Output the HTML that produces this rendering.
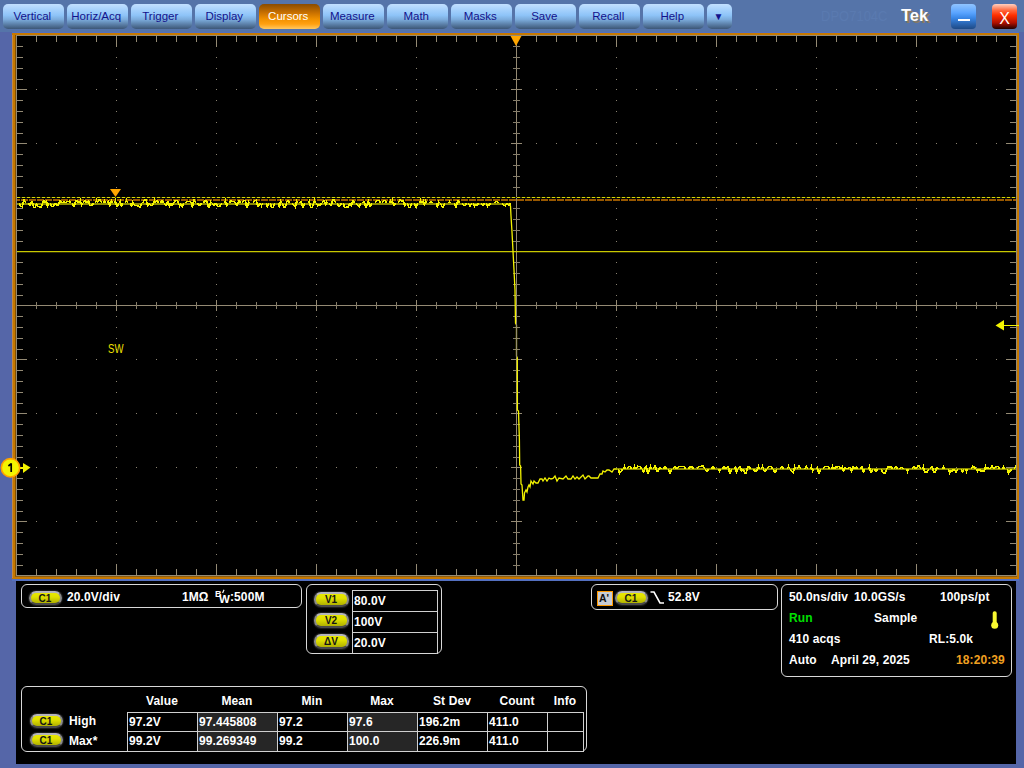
<!DOCTYPE html>
<html><head><meta charset="utf-8">
<style>
*{margin:0;padding:0;box-sizing:border-box}
html,body{width:1024px;height:768px;overflow:hidden;background:#5566a8;font-family:"Liberation Sans",sans-serif}
.tb{position:absolute;left:0;top:0;width:1024px;height:32px;background:#5574a9}
.hl{position:absolute;left:12px;top:32px;width:1007px;height:1px;background:#5270c0}
.fr{position:absolute;left:12px;top:33px;width:1007px;height:546px;background:#c67800}
.frl{position:absolute;left:15px;top:35px;width:1px;height:541px;background:#845000}
.frl2{position:absolute;left:12px;top:35px;width:1px;height:543px;background:#c08848}
.btn{position:absolute;top:4px;height:25px;width:60.5px;border-radius:5px;background:linear-gradient(#c2e0ff 0%,#a4d0fc 25%,#8ec4f8 45%,#7cacdc 62%,#5a7ea6 82%,#3c5676 100%);color:#12128c;font-size:11.5px;text-align:center;line-height:25px;text-indent:-2px}
.btn.on{background:linear-gradient(#8a4c00 0%,#c87000 35%,#f09000 60%,#ffa010 80%,#ffc860 100%);color:#fff}
.mn{position:absolute;left:951px;top:4px;width:25px;height:25px;border-radius:4px;background:linear-gradient(#90c4ff 0%,#5aa4ff 35%,#3a88e8 55%,#2a64b0 80%,#1e4a86 100%)}
.mn i{position:absolute;left:7px;top:15px;width:12px;height:2px;background:#fff}
.cl{position:absolute;left:992px;top:4px;width:25px;height:25px;border-radius:4px;background:linear-gradient(#ffd0c0 0%,#ff6a40 25%,#ff3000 45%,#b01000 75%,#200000 100%);color:#fff;font-size:16px;text-align:center;line-height:29px;overflow:hidden}
.tek{position:absolute;left:901px;top:6px;font-size:16.5px;font-weight:bold;color:#fff;text-shadow:2px 2px 0 #8a7a60}
.dpo{position:absolute;left:821px;top:8px;font-size:13px;color:#5a7ab0;transform:scaleY(1.1);transform-origin:0 0}
.bp{position:absolute;left:16px;top:581px;width:1000px;height:183px;background:#000}
.hl2{position:absolute;left:12px;top:579px;width:1007px;height:2px;background:#5470c0}
.frb{position:absolute;left:15px;top:576px;width:1002px;height:1px;background:#8a5a10}
.box{position:absolute;border:1.5px solid #d8d8d8;border-radius:6px}
.t{position:absolute;color:#fff;font-size:12px;font-weight:bold;white-space:nowrap;line-height:14px;letter-spacing:0.1px}
.pill{position:absolute;width:33px;height:14px;border-radius:7px;border:2px solid #8a8a8a;border-top-color:#b4b4bc;border-bottom-color:#4a4a4a;background:linear-gradient(#e8e800 0%,#e0e000 40%,#b0b000 100%);box-shadow:0 0 1px 1px #202020;color:#141414;font-size:10px;font-weight:bold;text-align:center;line-height:12px;text-indent:-1px}
</style></head><body>
<div class="tb"></div>
<div class="btn" style="left:3px">Vertical</div>
<div class="btn" style="left:67px">Horiz/Acq</div>
<div class="btn" style="left:131px">Trigger</div>
<div class="btn" style="left:195px">Display</div>
<div class="btn on" style="left:259px">Cursors</div>
<div class="btn" style="left:323px">Measure</div>
<div class="btn" style="left:387px">Math</div>
<div class="btn" style="left:451px">Masks</div>
<div class="btn" style="left:515px">Save</div>
<div class="btn" style="left:579px">Recall</div>
<div class="btn" style="left:643px">Help</div>
<div class="btn" style="left:707px;width:25px;font-size:10px">&#9660;</div>
<div class="dpo">DPO7104C</div>
<div class="tek">Tek</div>
<div class="mn"><i></i></div>
<div class="cl">X</div>
<div class="hl"></div>
<div class="fr"></div>
<div class="frl"></div>
<div class="frl2"></div>
<div class="frb"></div>
<div class="hl2"></div>
<svg width="1024" height="768" viewBox="0 0 1024 768" style="position:absolute;left:0;top:0" shape-rendering="crispEdges">
<defs><clipPath id="gc"><rect x="17" y="36" width="999" height="539"/></clipPath></defs>
<rect x="16" y="35" width="1001" height="541" fill="#000"/>
<path d="M116 57.05h1v1h-1zM116 67.85h1v1h-1zM116 78.65h1v1h-1zM116 89.45h1v1h-1zM116 100.25h1v1h-1zM116 111.05h1v1h-1zM116 121.85h1v1h-1zM116 132.65h1v1h-1zM116 143.45h1v1h-1zM116 154.25h1v1h-1zM116 165.05h1v1h-1zM116 175.85h1v1h-1zM116 186.65h1v1h-1zM116 197.45h1v1h-1zM116 208.25h1v1h-1zM116 219.05h1v1h-1zM116 229.85h1v1h-1zM116 240.65h1v1h-1zM116 251.45h1v1h-1zM116 262.25h1v1h-1zM116 273.05h1v1h-1zM116 283.85h1v1h-1zM116 294.65h1v1h-1zM116 305.45h1v1h-1zM116 316.25h1v1h-1zM116 327.05h1v1h-1zM116 337.85h1v1h-1zM116 348.65h1v1h-1zM116 359.45h1v1h-1zM116 370.25h1v1h-1zM116 381.05h1v1h-1zM116 391.85h1v1h-1zM116 402.65h1v1h-1zM116 413.45h1v1h-1zM116 424.25h1v1h-1zM116 435.05h1v1h-1zM116 445.85h1v1h-1zM116 456.65h1v1h-1zM116 467.45h1v1h-1zM116 478.25h1v1h-1zM116 489.05h1v1h-1zM116 499.85h1v1h-1zM116 510.65h1v1h-1zM116 521.45h1v1h-1zM116 532.25h1v1h-1zM116 543.05h1v1h-1zM116 553.85h1v1h-1zM216 57.05h1v1h-1zM216 67.85h1v1h-1zM216 78.65h1v1h-1zM216 89.45h1v1h-1zM216 100.25h1v1h-1zM216 111.05h1v1h-1zM216 121.85h1v1h-1zM216 132.65h1v1h-1zM216 143.45h1v1h-1zM216 154.25h1v1h-1zM216 165.05h1v1h-1zM216 175.85h1v1h-1zM216 186.65h1v1h-1zM216 197.45h1v1h-1zM216 208.25h1v1h-1zM216 219.05h1v1h-1zM216 229.85h1v1h-1zM216 240.65h1v1h-1zM216 251.45h1v1h-1zM216 262.25h1v1h-1zM216 273.05h1v1h-1zM216 283.85h1v1h-1zM216 294.65h1v1h-1zM216 305.45h1v1h-1zM216 316.25h1v1h-1zM216 327.05h1v1h-1zM216 337.85h1v1h-1zM216 348.65h1v1h-1zM216 359.45h1v1h-1zM216 370.25h1v1h-1zM216 381.05h1v1h-1zM216 391.85h1v1h-1zM216 402.65h1v1h-1zM216 413.45h1v1h-1zM216 424.25h1v1h-1zM216 435.05h1v1h-1zM216 445.85h1v1h-1zM216 456.65h1v1h-1zM216 467.45h1v1h-1zM216 478.25h1v1h-1zM216 489.05h1v1h-1zM216 499.85h1v1h-1zM216 510.65h1v1h-1zM216 521.45h1v1h-1zM216 532.25h1v1h-1zM216 543.05h1v1h-1zM216 553.85h1v1h-1zM316 57.05h1v1h-1zM316 67.85h1v1h-1zM316 78.65h1v1h-1zM316 89.45h1v1h-1zM316 100.25h1v1h-1zM316 111.05h1v1h-1zM316 121.85h1v1h-1zM316 132.65h1v1h-1zM316 143.45h1v1h-1zM316 154.25h1v1h-1zM316 165.05h1v1h-1zM316 175.85h1v1h-1zM316 186.65h1v1h-1zM316 197.45h1v1h-1zM316 208.25h1v1h-1zM316 219.05h1v1h-1zM316 229.85h1v1h-1zM316 240.65h1v1h-1zM316 251.45h1v1h-1zM316 262.25h1v1h-1zM316 273.05h1v1h-1zM316 283.85h1v1h-1zM316 294.65h1v1h-1zM316 305.45h1v1h-1zM316 316.25h1v1h-1zM316 327.05h1v1h-1zM316 337.85h1v1h-1zM316 348.65h1v1h-1zM316 359.45h1v1h-1zM316 370.25h1v1h-1zM316 381.05h1v1h-1zM316 391.85h1v1h-1zM316 402.65h1v1h-1zM316 413.45h1v1h-1zM316 424.25h1v1h-1zM316 435.05h1v1h-1zM316 445.85h1v1h-1zM316 456.65h1v1h-1zM316 467.45h1v1h-1zM316 478.25h1v1h-1zM316 489.05h1v1h-1zM316 499.85h1v1h-1zM316 510.65h1v1h-1zM316 521.45h1v1h-1zM316 532.25h1v1h-1zM316 543.05h1v1h-1zM316 553.85h1v1h-1zM416 57.05h1v1h-1zM416 67.85h1v1h-1zM416 78.65h1v1h-1zM416 89.45h1v1h-1zM416 100.25h1v1h-1zM416 111.05h1v1h-1zM416 121.85h1v1h-1zM416 132.65h1v1h-1zM416 143.45h1v1h-1zM416 154.25h1v1h-1zM416 165.05h1v1h-1zM416 175.85h1v1h-1zM416 186.65h1v1h-1zM416 197.45h1v1h-1zM416 208.25h1v1h-1zM416 219.05h1v1h-1zM416 229.85h1v1h-1zM416 240.65h1v1h-1zM416 251.45h1v1h-1zM416 262.25h1v1h-1zM416 273.05h1v1h-1zM416 283.85h1v1h-1zM416 294.65h1v1h-1zM416 305.45h1v1h-1zM416 316.25h1v1h-1zM416 327.05h1v1h-1zM416 337.85h1v1h-1zM416 348.65h1v1h-1zM416 359.45h1v1h-1zM416 370.25h1v1h-1zM416 381.05h1v1h-1zM416 391.85h1v1h-1zM416 402.65h1v1h-1zM416 413.45h1v1h-1zM416 424.25h1v1h-1zM416 435.05h1v1h-1zM416 445.85h1v1h-1zM416 456.65h1v1h-1zM416 467.45h1v1h-1zM416 478.25h1v1h-1zM416 489.05h1v1h-1zM416 499.85h1v1h-1zM416 510.65h1v1h-1zM416 521.45h1v1h-1zM416 532.25h1v1h-1zM416 543.05h1v1h-1zM416 553.85h1v1h-1zM616 57.05h1v1h-1zM616 67.85h1v1h-1zM616 78.65h1v1h-1zM616 89.45h1v1h-1zM616 100.25h1v1h-1zM616 111.05h1v1h-1zM616 121.85h1v1h-1zM616 132.65h1v1h-1zM616 143.45h1v1h-1zM616 154.25h1v1h-1zM616 165.05h1v1h-1zM616 175.85h1v1h-1zM616 186.65h1v1h-1zM616 197.45h1v1h-1zM616 208.25h1v1h-1zM616 219.05h1v1h-1zM616 229.85h1v1h-1zM616 240.65h1v1h-1zM616 251.45h1v1h-1zM616 262.25h1v1h-1zM616 273.05h1v1h-1zM616 283.85h1v1h-1zM616 294.65h1v1h-1zM616 305.45h1v1h-1zM616 316.25h1v1h-1zM616 327.05h1v1h-1zM616 337.85h1v1h-1zM616 348.65h1v1h-1zM616 359.45h1v1h-1zM616 370.25h1v1h-1zM616 381.05h1v1h-1zM616 391.85h1v1h-1zM616 402.65h1v1h-1zM616 413.45h1v1h-1zM616 424.25h1v1h-1zM616 435.05h1v1h-1zM616 445.85h1v1h-1zM616 456.65h1v1h-1zM616 467.45h1v1h-1zM616 478.25h1v1h-1zM616 489.05h1v1h-1zM616 499.85h1v1h-1zM616 510.65h1v1h-1zM616 521.45h1v1h-1zM616 532.25h1v1h-1zM616 543.05h1v1h-1zM616 553.85h1v1h-1zM716 57.05h1v1h-1zM716 67.85h1v1h-1zM716 78.65h1v1h-1zM716 89.45h1v1h-1zM716 100.25h1v1h-1zM716 111.05h1v1h-1zM716 121.85h1v1h-1zM716 132.65h1v1h-1zM716 143.45h1v1h-1zM716 154.25h1v1h-1zM716 165.05h1v1h-1zM716 175.85h1v1h-1zM716 186.65h1v1h-1zM716 197.45h1v1h-1zM716 208.25h1v1h-1zM716 219.05h1v1h-1zM716 229.85h1v1h-1zM716 240.65h1v1h-1zM716 251.45h1v1h-1zM716 262.25h1v1h-1zM716 273.05h1v1h-1zM716 283.85h1v1h-1zM716 294.65h1v1h-1zM716 305.45h1v1h-1zM716 316.25h1v1h-1zM716 327.05h1v1h-1zM716 337.85h1v1h-1zM716 348.65h1v1h-1zM716 359.45h1v1h-1zM716 370.25h1v1h-1zM716 381.05h1v1h-1zM716 391.85h1v1h-1zM716 402.65h1v1h-1zM716 413.45h1v1h-1zM716 424.25h1v1h-1zM716 435.05h1v1h-1zM716 445.85h1v1h-1zM716 456.65h1v1h-1zM716 467.45h1v1h-1zM716 478.25h1v1h-1zM716 489.05h1v1h-1zM716 499.85h1v1h-1zM716 510.65h1v1h-1zM716 521.45h1v1h-1zM716 532.25h1v1h-1zM716 543.05h1v1h-1zM716 553.85h1v1h-1zM816 57.05h1v1h-1zM816 67.85h1v1h-1zM816 78.65h1v1h-1zM816 89.45h1v1h-1zM816 100.25h1v1h-1zM816 111.05h1v1h-1zM816 121.85h1v1h-1zM816 132.65h1v1h-1zM816 143.45h1v1h-1zM816 154.25h1v1h-1zM816 165.05h1v1h-1zM816 175.85h1v1h-1zM816 186.65h1v1h-1zM816 197.45h1v1h-1zM816 208.25h1v1h-1zM816 219.05h1v1h-1zM816 229.85h1v1h-1zM816 240.65h1v1h-1zM816 251.45h1v1h-1zM816 262.25h1v1h-1zM816 273.05h1v1h-1zM816 283.85h1v1h-1zM816 294.65h1v1h-1zM816 305.45h1v1h-1zM816 316.25h1v1h-1zM816 327.05h1v1h-1zM816 337.85h1v1h-1zM816 348.65h1v1h-1zM816 359.45h1v1h-1zM816 370.25h1v1h-1zM816 381.05h1v1h-1zM816 391.85h1v1h-1zM816 402.65h1v1h-1zM816 413.45h1v1h-1zM816 424.25h1v1h-1zM816 435.05h1v1h-1zM816 445.85h1v1h-1zM816 456.65h1v1h-1zM816 467.45h1v1h-1zM816 478.25h1v1h-1zM816 489.05h1v1h-1zM816 499.85h1v1h-1zM816 510.65h1v1h-1zM816 521.45h1v1h-1zM816 532.25h1v1h-1zM816 543.05h1v1h-1zM816 553.85h1v1h-1zM916 57.05h1v1h-1zM916 67.85h1v1h-1zM916 78.65h1v1h-1zM916 89.45h1v1h-1zM916 100.25h1v1h-1zM916 111.05h1v1h-1zM916 121.85h1v1h-1zM916 132.65h1v1h-1zM916 143.45h1v1h-1zM916 154.25h1v1h-1zM916 165.05h1v1h-1zM916 175.85h1v1h-1zM916 186.65h1v1h-1zM916 197.45h1v1h-1zM916 208.25h1v1h-1zM916 219.05h1v1h-1zM916 229.85h1v1h-1zM916 240.65h1v1h-1zM916 251.45h1v1h-1zM916 262.25h1v1h-1zM916 273.05h1v1h-1zM916 283.85h1v1h-1zM916 294.65h1v1h-1zM916 305.45h1v1h-1zM916 316.25h1v1h-1zM916 327.05h1v1h-1zM916 337.85h1v1h-1zM916 348.65h1v1h-1zM916 359.45h1v1h-1zM916 370.25h1v1h-1zM916 381.05h1v1h-1zM916 391.85h1v1h-1zM916 402.65h1v1h-1zM916 413.45h1v1h-1zM916 424.25h1v1h-1zM916 435.05h1v1h-1zM916 445.85h1v1h-1zM916 456.65h1v1h-1zM916 467.45h1v1h-1zM916 478.25h1v1h-1zM916 489.05h1v1h-1zM916 499.85h1v1h-1zM916 510.65h1v1h-1zM916 521.45h1v1h-1zM916 532.25h1v1h-1zM916 543.05h1v1h-1zM916 553.85h1v1h-1zM36 89.45h1v1h-1zM56 89.45h1v1h-1zM76 89.45h1v1h-1zM96 89.45h1v1h-1zM136 89.45h1v1h-1zM156 89.45h1v1h-1zM176 89.45h1v1h-1zM196 89.45h1v1h-1zM236 89.45h1v1h-1zM256 89.45h1v1h-1zM276 89.45h1v1h-1zM296 89.45h1v1h-1zM336 89.45h1v1h-1zM356 89.45h1v1h-1zM376 89.45h1v1h-1zM396 89.45h1v1h-1zM436 89.45h1v1h-1zM456 89.45h1v1h-1zM476 89.45h1v1h-1zM496 89.45h1v1h-1zM536 89.45h1v1h-1zM556 89.45h1v1h-1zM576 89.45h1v1h-1zM596 89.45h1v1h-1zM636 89.45h1v1h-1zM656 89.45h1v1h-1zM676 89.45h1v1h-1zM696 89.45h1v1h-1zM736 89.45h1v1h-1zM756 89.45h1v1h-1zM776 89.45h1v1h-1zM796 89.45h1v1h-1zM836 89.45h1v1h-1zM856 89.45h1v1h-1zM876 89.45h1v1h-1zM896 89.45h1v1h-1zM936 89.45h1v1h-1zM956 89.45h1v1h-1zM976 89.45h1v1h-1zM996 89.45h1v1h-1zM36 143.45h1v1h-1zM56 143.45h1v1h-1zM76 143.45h1v1h-1zM96 143.45h1v1h-1zM136 143.45h1v1h-1zM156 143.45h1v1h-1zM176 143.45h1v1h-1zM196 143.45h1v1h-1zM236 143.45h1v1h-1zM256 143.45h1v1h-1zM276 143.45h1v1h-1zM296 143.45h1v1h-1zM336 143.45h1v1h-1zM356 143.45h1v1h-1zM376 143.45h1v1h-1zM396 143.45h1v1h-1zM436 143.45h1v1h-1zM456 143.45h1v1h-1zM476 143.45h1v1h-1zM496 143.45h1v1h-1zM536 143.45h1v1h-1zM556 143.45h1v1h-1zM576 143.45h1v1h-1zM596 143.45h1v1h-1zM636 143.45h1v1h-1zM656 143.45h1v1h-1zM676 143.45h1v1h-1zM696 143.45h1v1h-1zM736 143.45h1v1h-1zM756 143.45h1v1h-1zM776 143.45h1v1h-1zM796 143.45h1v1h-1zM836 143.45h1v1h-1zM856 143.45h1v1h-1zM876 143.45h1v1h-1zM896 143.45h1v1h-1zM936 143.45h1v1h-1zM956 143.45h1v1h-1zM976 143.45h1v1h-1zM996 143.45h1v1h-1zM36 197.45h1v1h-1zM56 197.45h1v1h-1zM76 197.45h1v1h-1zM96 197.45h1v1h-1zM136 197.45h1v1h-1zM156 197.45h1v1h-1zM176 197.45h1v1h-1zM196 197.45h1v1h-1zM236 197.45h1v1h-1zM256 197.45h1v1h-1zM276 197.45h1v1h-1zM296 197.45h1v1h-1zM336 197.45h1v1h-1zM356 197.45h1v1h-1zM376 197.45h1v1h-1zM396 197.45h1v1h-1zM436 197.45h1v1h-1zM456 197.45h1v1h-1zM476 197.45h1v1h-1zM496 197.45h1v1h-1zM536 197.45h1v1h-1zM556 197.45h1v1h-1zM576 197.45h1v1h-1zM596 197.45h1v1h-1zM636 197.45h1v1h-1zM656 197.45h1v1h-1zM676 197.45h1v1h-1zM696 197.45h1v1h-1zM736 197.45h1v1h-1zM756 197.45h1v1h-1zM776 197.45h1v1h-1zM796 197.45h1v1h-1zM836 197.45h1v1h-1zM856 197.45h1v1h-1zM876 197.45h1v1h-1zM896 197.45h1v1h-1zM936 197.45h1v1h-1zM956 197.45h1v1h-1zM976 197.45h1v1h-1zM996 197.45h1v1h-1zM36 251.45h1v1h-1zM56 251.45h1v1h-1zM76 251.45h1v1h-1zM96 251.45h1v1h-1zM136 251.45h1v1h-1zM156 251.45h1v1h-1zM176 251.45h1v1h-1zM196 251.45h1v1h-1zM236 251.45h1v1h-1zM256 251.45h1v1h-1zM276 251.45h1v1h-1zM296 251.45h1v1h-1zM336 251.45h1v1h-1zM356 251.45h1v1h-1zM376 251.45h1v1h-1zM396 251.45h1v1h-1zM436 251.45h1v1h-1zM456 251.45h1v1h-1zM476 251.45h1v1h-1zM496 251.45h1v1h-1zM536 251.45h1v1h-1zM556 251.45h1v1h-1zM576 251.45h1v1h-1zM596 251.45h1v1h-1zM636 251.45h1v1h-1zM656 251.45h1v1h-1zM676 251.45h1v1h-1zM696 251.45h1v1h-1zM736 251.45h1v1h-1zM756 251.45h1v1h-1zM776 251.45h1v1h-1zM796 251.45h1v1h-1zM836 251.45h1v1h-1zM856 251.45h1v1h-1zM876 251.45h1v1h-1zM896 251.45h1v1h-1zM936 251.45h1v1h-1zM956 251.45h1v1h-1zM976 251.45h1v1h-1zM996 251.45h1v1h-1zM36 359.45h1v1h-1zM56 359.45h1v1h-1zM76 359.45h1v1h-1zM96 359.45h1v1h-1zM136 359.45h1v1h-1zM156 359.45h1v1h-1zM176 359.45h1v1h-1zM196 359.45h1v1h-1zM236 359.45h1v1h-1zM256 359.45h1v1h-1zM276 359.45h1v1h-1zM296 359.45h1v1h-1zM336 359.45h1v1h-1zM356 359.45h1v1h-1zM376 359.45h1v1h-1zM396 359.45h1v1h-1zM436 359.45h1v1h-1zM456 359.45h1v1h-1zM476 359.45h1v1h-1zM496 359.45h1v1h-1zM536 359.45h1v1h-1zM556 359.45h1v1h-1zM576 359.45h1v1h-1zM596 359.45h1v1h-1zM636 359.45h1v1h-1zM656 359.45h1v1h-1zM676 359.45h1v1h-1zM696 359.45h1v1h-1zM736 359.45h1v1h-1zM756 359.45h1v1h-1zM776 359.45h1v1h-1zM796 359.45h1v1h-1zM836 359.45h1v1h-1zM856 359.45h1v1h-1zM876 359.45h1v1h-1zM896 359.45h1v1h-1zM936 359.45h1v1h-1zM956 359.45h1v1h-1zM976 359.45h1v1h-1zM996 359.45h1v1h-1zM36 413.45h1v1h-1zM56 413.45h1v1h-1zM76 413.45h1v1h-1zM96 413.45h1v1h-1zM136 413.45h1v1h-1zM156 413.45h1v1h-1zM176 413.45h1v1h-1zM196 413.45h1v1h-1zM236 413.45h1v1h-1zM256 413.45h1v1h-1zM276 413.45h1v1h-1zM296 413.45h1v1h-1zM336 413.45h1v1h-1zM356 413.45h1v1h-1zM376 413.45h1v1h-1zM396 413.45h1v1h-1zM436 413.45h1v1h-1zM456 413.45h1v1h-1zM476 413.45h1v1h-1zM496 413.45h1v1h-1zM536 413.45h1v1h-1zM556 413.45h1v1h-1zM576 413.45h1v1h-1zM596 413.45h1v1h-1zM636 413.45h1v1h-1zM656 413.45h1v1h-1zM676 413.45h1v1h-1zM696 413.45h1v1h-1zM736 413.45h1v1h-1zM756 413.45h1v1h-1zM776 413.45h1v1h-1zM796 413.45h1v1h-1zM836 413.45h1v1h-1zM856 413.45h1v1h-1zM876 413.45h1v1h-1zM896 413.45h1v1h-1zM936 413.45h1v1h-1zM956 413.45h1v1h-1zM976 413.45h1v1h-1zM996 413.45h1v1h-1zM36 467.45h1v1h-1zM56 467.45h1v1h-1zM76 467.45h1v1h-1zM96 467.45h1v1h-1zM136 467.45h1v1h-1zM156 467.45h1v1h-1zM176 467.45h1v1h-1zM196 467.45h1v1h-1zM236 467.45h1v1h-1zM256 467.45h1v1h-1zM276 467.45h1v1h-1zM296 467.45h1v1h-1zM336 467.45h1v1h-1zM356 467.45h1v1h-1zM376 467.45h1v1h-1zM396 467.45h1v1h-1zM436 467.45h1v1h-1zM456 467.45h1v1h-1zM476 467.45h1v1h-1zM496 467.45h1v1h-1zM536 467.45h1v1h-1zM556 467.45h1v1h-1zM576 467.45h1v1h-1zM596 467.45h1v1h-1zM636 467.45h1v1h-1zM656 467.45h1v1h-1zM676 467.45h1v1h-1zM696 467.45h1v1h-1zM736 467.45h1v1h-1zM756 467.45h1v1h-1zM776 467.45h1v1h-1zM796 467.45h1v1h-1zM836 467.45h1v1h-1zM856 467.45h1v1h-1zM876 467.45h1v1h-1zM896 467.45h1v1h-1zM936 467.45h1v1h-1zM956 467.45h1v1h-1zM976 467.45h1v1h-1zM996 467.45h1v1h-1zM36 521.45h1v1h-1zM56 521.45h1v1h-1zM76 521.45h1v1h-1zM96 521.45h1v1h-1zM136 521.45h1v1h-1zM156 521.45h1v1h-1zM176 521.45h1v1h-1zM196 521.45h1v1h-1zM236 521.45h1v1h-1zM256 521.45h1v1h-1zM276 521.45h1v1h-1zM296 521.45h1v1h-1zM336 521.45h1v1h-1zM356 521.45h1v1h-1zM376 521.45h1v1h-1zM396 521.45h1v1h-1zM436 521.45h1v1h-1zM456 521.45h1v1h-1zM476 521.45h1v1h-1zM496 521.45h1v1h-1zM536 521.45h1v1h-1zM556 521.45h1v1h-1zM576 521.45h1v1h-1zM596 521.45h1v1h-1zM636 521.45h1v1h-1zM656 521.45h1v1h-1zM676 521.45h1v1h-1zM696 521.45h1v1h-1zM736 521.45h1v1h-1zM756 521.45h1v1h-1zM776 521.45h1v1h-1zM796 521.45h1v1h-1zM836 521.45h1v1h-1zM856 521.45h1v1h-1zM876 521.45h1v1h-1zM896 521.45h1v1h-1zM936 521.45h1v1h-1zM956 521.45h1v1h-1zM976 521.45h1v1h-1zM996 521.45h1v1h-1z" fill="#8a8270"/>
<path d="M16.00 35.00h1001.00v1.00h-1001.00zM16.00 575.00h1001.00v1.00h-1001.00zM16.00 35.00h1.00v541.00h-1.00zM1016.00 35.00h1.00v541.00h-1.00zM16.00 305.00h1000.00v1.00h-1000.00zM516.00 35.00h1.00v540.00h-1.00zM36.00 36.00h1.00v6.00h-1.00zM36.00 569.00h1.00v6.00h-1.00zM56.00 36.00h1.00v6.00h-1.00zM56.00 569.00h1.00v6.00h-1.00zM76.00 36.00h1.00v6.00h-1.00zM76.00 569.00h1.00v6.00h-1.00zM96.00 36.00h1.00v6.00h-1.00zM96.00 569.00h1.00v6.00h-1.00zM116.00 36.00h1.00v11.00h-1.00zM116.00 564.00h1.00v11.00h-1.00zM116.00 300.00h1.00v11.00h-1.00zM136.00 36.00h1.00v6.00h-1.00zM136.00 569.00h1.00v6.00h-1.00zM156.00 36.00h1.00v6.00h-1.00zM156.00 569.00h1.00v6.00h-1.00zM176.00 36.00h1.00v6.00h-1.00zM176.00 569.00h1.00v6.00h-1.00zM196.00 36.00h1.00v6.00h-1.00zM196.00 569.00h1.00v6.00h-1.00zM216.00 36.00h1.00v11.00h-1.00zM216.00 564.00h1.00v11.00h-1.00zM216.00 300.00h1.00v11.00h-1.00zM236.00 36.00h1.00v6.00h-1.00zM236.00 569.00h1.00v6.00h-1.00zM256.00 36.00h1.00v6.00h-1.00zM256.00 569.00h1.00v6.00h-1.00zM276.00 36.00h1.00v6.00h-1.00zM276.00 569.00h1.00v6.00h-1.00zM296.00 36.00h1.00v6.00h-1.00zM296.00 569.00h1.00v6.00h-1.00zM316.00 36.00h1.00v11.00h-1.00zM316.00 564.00h1.00v11.00h-1.00zM316.00 300.00h1.00v11.00h-1.00zM336.00 36.00h1.00v6.00h-1.00zM336.00 569.00h1.00v6.00h-1.00zM356.00 36.00h1.00v6.00h-1.00zM356.00 569.00h1.00v6.00h-1.00zM376.00 36.00h1.00v6.00h-1.00zM376.00 569.00h1.00v6.00h-1.00zM396.00 36.00h1.00v6.00h-1.00zM396.00 569.00h1.00v6.00h-1.00zM416.00 36.00h1.00v11.00h-1.00zM416.00 564.00h1.00v11.00h-1.00zM416.00 300.00h1.00v11.00h-1.00zM436.00 36.00h1.00v6.00h-1.00zM436.00 569.00h1.00v6.00h-1.00zM456.00 36.00h1.00v6.00h-1.00zM456.00 569.00h1.00v6.00h-1.00zM476.00 36.00h1.00v6.00h-1.00zM476.00 569.00h1.00v6.00h-1.00zM496.00 36.00h1.00v6.00h-1.00zM496.00 569.00h1.00v6.00h-1.00zM516.00 36.00h1.00v11.00h-1.00zM516.00 564.00h1.00v11.00h-1.00zM516.00 300.00h1.00v11.00h-1.00zM536.00 36.00h1.00v6.00h-1.00zM536.00 569.00h1.00v6.00h-1.00zM556.00 36.00h1.00v6.00h-1.00zM556.00 569.00h1.00v6.00h-1.00zM576.00 36.00h1.00v6.00h-1.00zM576.00 569.00h1.00v6.00h-1.00zM596.00 36.00h1.00v6.00h-1.00zM596.00 569.00h1.00v6.00h-1.00zM616.00 36.00h1.00v11.00h-1.00zM616.00 564.00h1.00v11.00h-1.00zM616.00 300.00h1.00v11.00h-1.00zM636.00 36.00h1.00v6.00h-1.00zM636.00 569.00h1.00v6.00h-1.00zM656.00 36.00h1.00v6.00h-1.00zM656.00 569.00h1.00v6.00h-1.00zM676.00 36.00h1.00v6.00h-1.00zM676.00 569.00h1.00v6.00h-1.00zM696.00 36.00h1.00v6.00h-1.00zM696.00 569.00h1.00v6.00h-1.00zM716.00 36.00h1.00v11.00h-1.00zM716.00 564.00h1.00v11.00h-1.00zM716.00 300.00h1.00v11.00h-1.00zM736.00 36.00h1.00v6.00h-1.00zM736.00 569.00h1.00v6.00h-1.00zM756.00 36.00h1.00v6.00h-1.00zM756.00 569.00h1.00v6.00h-1.00zM776.00 36.00h1.00v6.00h-1.00zM776.00 569.00h1.00v6.00h-1.00zM796.00 36.00h1.00v6.00h-1.00zM796.00 569.00h1.00v6.00h-1.00zM816.00 36.00h1.00v11.00h-1.00zM816.00 564.00h1.00v11.00h-1.00zM816.00 300.00h1.00v11.00h-1.00zM836.00 36.00h1.00v6.00h-1.00zM836.00 569.00h1.00v6.00h-1.00zM856.00 36.00h1.00v6.00h-1.00zM856.00 569.00h1.00v6.00h-1.00zM876.00 36.00h1.00v6.00h-1.00zM876.00 569.00h1.00v6.00h-1.00zM896.00 36.00h1.00v6.00h-1.00zM896.00 569.00h1.00v6.00h-1.00zM916.00 36.00h1.00v11.00h-1.00zM916.00 564.00h1.00v11.00h-1.00zM916.00 300.00h1.00v11.00h-1.00zM936.00 36.00h1.00v6.00h-1.00zM936.00 569.00h1.00v6.00h-1.00zM956.00 36.00h1.00v6.00h-1.00zM956.00 569.00h1.00v6.00h-1.00zM976.00 36.00h1.00v6.00h-1.00zM976.00 569.00h1.00v6.00h-1.00zM996.00 36.00h1.00v6.00h-1.00zM996.00 569.00h1.00v6.00h-1.00zM17.00 46.25h6.00v1.00h-6.00zM1010.00 46.25h6.00v1.00h-6.00zM17.00 57.05h6.00v1.00h-6.00zM1010.00 57.05h6.00v1.00h-6.00zM17.00 67.85h6.00v1.00h-6.00zM1010.00 67.85h6.00v1.00h-6.00zM17.00 78.65h6.00v1.00h-6.00zM1010.00 78.65h6.00v1.00h-6.00zM17.00 89.45h10.00v1.00h-10.00zM1006.00 89.45h10.00v1.00h-10.00zM511.00 89.45h11.00v1.00h-11.00zM17.00 100.25h6.00v1.00h-6.00zM1010.00 100.25h6.00v1.00h-6.00zM17.00 111.05h6.00v1.00h-6.00zM1010.00 111.05h6.00v1.00h-6.00zM17.00 121.85h6.00v1.00h-6.00zM1010.00 121.85h6.00v1.00h-6.00zM17.00 132.65h6.00v1.00h-6.00zM1010.00 132.65h6.00v1.00h-6.00zM17.00 143.45h10.00v1.00h-10.00zM1006.00 143.45h10.00v1.00h-10.00zM511.00 143.45h11.00v1.00h-11.00zM17.00 154.25h6.00v1.00h-6.00zM1010.00 154.25h6.00v1.00h-6.00zM17.00 165.05h6.00v1.00h-6.00zM1010.00 165.05h6.00v1.00h-6.00zM17.00 175.85h6.00v1.00h-6.00zM1010.00 175.85h6.00v1.00h-6.00zM17.00 186.65h6.00v1.00h-6.00zM1010.00 186.65h6.00v1.00h-6.00zM17.00 197.45h10.00v1.00h-10.00zM1006.00 197.45h10.00v1.00h-10.00zM511.00 197.45h11.00v1.00h-11.00zM17.00 208.25h6.00v1.00h-6.00zM1010.00 208.25h6.00v1.00h-6.00zM17.00 219.05h6.00v1.00h-6.00zM1010.00 219.05h6.00v1.00h-6.00zM17.00 229.85h6.00v1.00h-6.00zM1010.00 229.85h6.00v1.00h-6.00zM17.00 240.65h6.00v1.00h-6.00zM1010.00 240.65h6.00v1.00h-6.00zM17.00 251.45h10.00v1.00h-10.00zM1006.00 251.45h10.00v1.00h-10.00zM511.00 251.45h11.00v1.00h-11.00zM17.00 262.25h6.00v1.00h-6.00zM1010.00 262.25h6.00v1.00h-6.00zM17.00 273.05h6.00v1.00h-6.00zM1010.00 273.05h6.00v1.00h-6.00zM17.00 283.85h6.00v1.00h-6.00zM1010.00 283.85h6.00v1.00h-6.00zM17.00 294.65h6.00v1.00h-6.00zM1010.00 294.65h6.00v1.00h-6.00zM17.00 305.45h10.00v1.00h-10.00zM1006.00 305.45h10.00v1.00h-10.00zM511.00 305.45h11.00v1.00h-11.00zM17.00 316.25h6.00v1.00h-6.00zM1010.00 316.25h6.00v1.00h-6.00zM17.00 327.05h6.00v1.00h-6.00zM1010.00 327.05h6.00v1.00h-6.00zM17.00 337.85h6.00v1.00h-6.00zM1010.00 337.85h6.00v1.00h-6.00zM17.00 348.65h6.00v1.00h-6.00zM1010.00 348.65h6.00v1.00h-6.00zM17.00 359.45h10.00v1.00h-10.00zM1006.00 359.45h10.00v1.00h-10.00zM511.00 359.45h11.00v1.00h-11.00zM17.00 370.25h6.00v1.00h-6.00zM1010.00 370.25h6.00v1.00h-6.00zM17.00 381.05h6.00v1.00h-6.00zM1010.00 381.05h6.00v1.00h-6.00zM17.00 391.85h6.00v1.00h-6.00zM1010.00 391.85h6.00v1.00h-6.00zM17.00 402.65h6.00v1.00h-6.00zM1010.00 402.65h6.00v1.00h-6.00zM17.00 413.45h10.00v1.00h-10.00zM1006.00 413.45h10.00v1.00h-10.00zM511.00 413.45h11.00v1.00h-11.00zM17.00 424.25h6.00v1.00h-6.00zM1010.00 424.25h6.00v1.00h-6.00zM17.00 435.05h6.00v1.00h-6.00zM1010.00 435.05h6.00v1.00h-6.00zM17.00 445.85h6.00v1.00h-6.00zM1010.00 445.85h6.00v1.00h-6.00zM17.00 456.65h6.00v1.00h-6.00zM1010.00 456.65h6.00v1.00h-6.00zM17.00 467.45h10.00v1.00h-10.00zM1006.00 467.45h10.00v1.00h-10.00zM511.00 467.45h11.00v1.00h-11.00zM17.00 478.25h6.00v1.00h-6.00zM1010.00 478.25h6.00v1.00h-6.00zM17.00 489.05h6.00v1.00h-6.00zM1010.00 489.05h6.00v1.00h-6.00zM17.00 499.85h6.00v1.00h-6.00zM1010.00 499.85h6.00v1.00h-6.00zM17.00 510.65h6.00v1.00h-6.00zM1010.00 510.65h6.00v1.00h-6.00zM17.00 521.45h10.00v1.00h-10.00zM1006.00 521.45h10.00v1.00h-10.00zM511.00 521.45h11.00v1.00h-11.00zM17.00 532.25h6.00v1.00h-6.00zM1010.00 532.25h6.00v1.00h-6.00zM17.00 543.05h6.00v1.00h-6.00zM1010.00 543.05h6.00v1.00h-6.00zM17.00 553.85h6.00v1.00h-6.00zM1010.00 553.85h6.00v1.00h-6.00zM17.00 564.65h6.00v1.00h-6.00zM1010.00 564.65h6.00v1.00h-6.00z" fill="#948a74"/>
<path d="M36 302h1v7h-1zM56 302h1v7h-1zM76 302h1v7h-1zM96 302h1v7h-1zM136 302h1v7h-1zM156 302h1v7h-1zM176 302h1v7h-1zM196 302h1v7h-1zM236 302h1v7h-1zM256 302h1v7h-1zM276 302h1v7h-1zM296 302h1v7h-1zM336 302h1v7h-1zM356 302h1v7h-1zM376 302h1v7h-1zM396 302h1v7h-1zM436 302h1v7h-1zM456 302h1v7h-1zM476 302h1v7h-1zM496 302h1v7h-1zM536 302h1v7h-1zM556 302h1v7h-1zM576 302h1v7h-1zM596 302h1v7h-1zM636 302h1v7h-1zM656 302h1v7h-1zM676 302h1v7h-1zM696 302h1v7h-1zM736 302h1v7h-1zM756 302h1v7h-1zM776 302h1v7h-1zM796 302h1v7h-1zM836 302h1v7h-1zM856 302h1v7h-1zM876 302h1v7h-1zM896 302h1v7h-1zM936 302h1v7h-1zM956 302h1v7h-1zM976 302h1v7h-1zM996 302h1v7h-1zM513 46.25h7v1h-7zM513 57.05h7v1h-7zM513 67.85h7v1h-7zM513 78.65h7v1h-7zM513 100.25h7v1h-7zM513 111.05h7v1h-7zM513 121.85h7v1h-7zM513 132.65h7v1h-7zM513 154.25h7v1h-7zM513 165.05h7v1h-7zM513 175.85h7v1h-7zM513 186.65h7v1h-7zM513 208.25h7v1h-7zM513 219.05h7v1h-7zM513 229.85h7v1h-7zM513 240.65h7v1h-7zM513 262.25h7v1h-7zM513 273.05h7v1h-7zM513 283.85h7v1h-7zM513 294.65h7v1h-7zM513 316.25h7v1h-7zM513 327.05h7v1h-7zM513 337.85h7v1h-7zM513 348.65h7v1h-7zM513 370.25h7v1h-7zM513 381.05h7v1h-7zM513 391.85h7v1h-7zM513 402.65h7v1h-7zM513 424.25h7v1h-7zM513 435.05h7v1h-7zM513 445.85h7v1h-7zM513 456.65h7v1h-7zM513 478.25h7v1h-7zM513 489.05h7v1h-7zM513 499.85h7v1h-7zM513 510.65h7v1h-7zM513 532.25h7v1h-7zM513 543.05h7v1h-7zM513 553.85h7v1h-7zM513 564.65h7v1h-7z" fill="#857d6a"/>
<!-- cursors -->
<line x1="17" y1="251.6" x2="1016" y2="251.6" stroke="#c8c800" stroke-width="1.4" shape-rendering="auto"/>
<line x1="17" y1="197.5" x2="1016" y2="197.5" stroke="#3c3c00" stroke-width="1"/>
<line x1="17" y1="197.5" x2="1016" y2="197.5" stroke="#d8d800" stroke-width="1.2" stroke-dasharray="3 2"/>
<line x1="17" y1="200" x2="1016" y2="200" stroke="#985800" stroke-width="2" stroke-dasharray="7 1" stroke-dashoffset="4"/>
<!-- trace dim baseline -->
<line x1="17" y1="203.5" x2="510" y2="203.5" stroke="#8a8a00" stroke-width="2"/>
<line x1="617" y1="469" x2="1016" y2="469" stroke="#8a8a00" stroke-width="1.5"/>
<path d="M19.5 203 L20.5 206.5 H21.5 L22.5 207 H22.5 L23.5 200 H24.5 L25.5 203 M28.5 203 L29.5 205 H30.5 L31.5 201.5 H32.5 L33.5 207.5 H35.5 L36.5 203 M36.5 203 L37.5 206.5 H39.5 L40.5 207.5 H40.5 L41.5 207 H41.5 L42.5 203 M42.5 203 L43.5 201 H44.5 L45.5 203 M45.5 203 L46.5 200 H46.5 L47.5 207.5 H47.5 L48.5 203 M50.5 203 L51.5 206.5 H53.5 L54.5 203 M55.5 203 L56.5 205 H58.5 L59.5 201 H60.5 L61.5 203 M62.5 203 L63.5 201.5 H64.5 L65.5 203 M65.5 203 L66.5 201.5 H68.5 L69.5 201 H69.5 L70.5 203 M72.5 203 L73.5 206.5 H74.5 L75.5 201 H77.5 L78.5 203 M79.5 203 L80.5 200.5 H80.5 L81.5 205 H81.5 L82.5 203 M83.5 203 L84.5 200.5 H85.5 L86.5 203 M87.5 203 L88.5 200 H88.5 L89.5 205.5 H90.5 L91.5 205 H92.5 L93.5 203 M95.5 203 L96.5 200 H96.5 L97.5 203 M97.5 203 L98.5 200 H100.5 L101.5 203 M103.5 203 L104.5 201 H104.5 L105.5 203 M107.5 203 L108.5 200 H108.5 L109.5 206.5 H109.5 L110.5 203 M110.5 203 L111.5 201 H111.5 L112.5 203 M114.5 203 L115.5 200.5 H115.5 L116.5 206.5 H117.5 L118.5 203 M119.5 203 L120.5 201 H120.5 L121.5 207 H121.5 L122.5 203 M125.5 203 L126.5 200 H126.5 L127.5 203 M130.5 203 L131.5 207 H131.5 L132.5 201.5 H132.5 L133.5 203 M133.5 203 L134.5 205.5 H136.5 L137.5 206 H138.5 L139.5 207 H140.5 L141.5 203 M142.5 203 L143.5 201.5 H143.5 L144.5 200 H146.5 L147.5 207 H147.5 L148.5 203 M149.5 203 L150.5 205.5 H152.5 L153.5 203 M153.5 203 L154.5 200.5 H154.5 L155.5 203 M155.5 203 L156.5 200.5 H157.5 L158.5 203 M160.5 203 L161.5 201 H162.5 L163.5 203 M164.5 203 L165.5 205.5 H166.5 L167.5 201.5 H168.5 L169.5 207.5 H169.5 L170.5 203 M170.5 203 L171.5 205 H172.5 L173.5 203 M173.5 203 L174.5 201.5 H174.5 L175.5 200.5 H177.5 L178.5 203 M178.5 203 L179.5 206 H179.5 L180.5 203 M180.5 203 L181.5 206.5 H181.5 L182.5 207 H182.5 L183.5 203 M185.5 203 L186.5 201.5 H187.5 L188.5 201.5 H190.5 L191.5 203 M191.5 203 L192.5 207.5 H192.5 L193.5 200 H194.5 L195.5 203 M197.5 203 L198.5 205 H199.5 L200.5 205 H200.5 L201.5 203 M203.5 203 L204.5 201 H206.5 L207.5 203 M207.5 203 L208.5 207.5 H209.5 L210.5 201.5 H210.5 L211.5 203 M212.5 203 L213.5 205.5 H214.5 L215.5 203 M216.5 203 L217.5 206.5 H218.5 L219.5 206 H220.5 L221.5 203 M224.5 203 L225.5 200.5 H225.5 L226.5 206.5 H226.5 L227.5 203 M229.5 203 L230.5 201 H231.5 L232.5 201.5 H234.5 L235.5 203 M235.5 203 L236.5 205 H237.5 L238.5 201 H239.5 L240.5 203 M242.5 203 L243.5 200.5 H245.5 L246.5 207 H247.5 L248.5 201.5 H248.5 L249.5 203 M253.5 203 L254.5 200.5 H255.5 L256.5 200 H256.5 L257.5 206.5 H258.5 L259.5 203 M260.5 203 L261.5 206 H261.5 L262.5 203 M266.5 203 L267.5 207.5 H267.5 L268.5 203 M270.5 203 L271.5 207.5 H273.5 L274.5 203 M278.5 203 L279.5 207.5 H279.5 L280.5 200.5 H280.5 L281.5 203 M282.5 203 L283.5 207 H285.5 L286.5 203 M286.5 203 L287.5 200.5 H288.5 L289.5 203 M292.5 203 L293.5 205.5 H294.5 L295.5 207.5 H295.5 L296.5 200.5 H296.5 L297.5 203 M299.5 203 L300.5 201.5 H301.5 L302.5 207.5 H303.5 L304.5 203 M308.5 203 L309.5 201 H309.5 L310.5 207.5 H312.5 L313.5 203 M313.5 203 L314.5 200.5 H314.5 L315.5 203 M316.5 203 L317.5 206 H317.5 L318.5 205 H318.5 L319.5 205 H320.5 L321.5 203 M322.5 203 L323.5 200.5 H324.5 L325.5 205.5 H325.5 L326.5 201.5 H326.5 L327.5 203 M329.5 203 L330.5 205.5 H331.5 L332.5 200 H334.5 L335.5 203 M337.5 203 L338.5 206.5 H339.5 L340.5 205 H340.5 L341.5 203 M343.5 203 L344.5 207.5 H345.5 L346.5 207 H347.5 L348.5 207 H348.5 L349.5 203 M350.5 203 L351.5 207 H351.5 L352.5 201 H353.5 L354.5 203 M356.5 203 L357.5 205.5 H358.5 L359.5 207 H359.5 L360.5 203 M362.5 203 L363.5 201.5 H364.5 L365.5 207 H366.5 L367.5 203 M367.5 203 L368.5 201 H368.5 L369.5 206.5 H370.5 L371.5 203 M375.5 203 L376.5 200.5 H377.5 L378.5 200.5 H379.5 L380.5 203 M382.5 203 L383.5 200.5 H384.5 L385.5 200.5 H385.5 L386.5 203 M389.5 203 L390.5 201 H390.5 L391.5 203 M391.5 203 L392.5 200.5 H392.5 L393.5 205 H394.5 L395.5 203 M398.5 203 L399.5 200 H400.5 L401.5 201 H403.5 L404.5 206.5 H404.5 L405.5 203 M407.5 203 L408.5 207 H408.5 L409.5 207.5 H410.5 L411.5 203 M414.5 203 L415.5 207 H416.5 L417.5 203 M419.5 203 L420.5 200.5 H420.5 L421.5 203 M422.5 203 L423.5 201 H423.5 L424.5 205.5 H424.5 L425.5 201 H425.5 L426.5 203 M429.5 203 L430.5 201.5 H431.5 L432.5 203 M436.5 203 L437.5 207.5 H437.5 L438.5 201.5 H438.5 L439.5 203 M440.5 203 L441.5 206 H441.5 L442.5 207.5 H442.5 L443.5 207.5 H443.5 L444.5 203 M448.5 203 L449.5 201.5 H449.5 L450.5 203 M454.5 203 L455.5 207 H456.5 L457.5 201 H457.5 L458.5 201 H458.5 L459.5 203 M462.5 203 L463.5 205.5 H465.5 L466.5 203 M468.5 203 L469.5 206 H470.5 L471.5 203 M473.5 203 L474.5 206.5 H474.5 L475.5 205 H477.5 L478.5 203 M481.5 203 L482.5 205.5 H483.5 L484.5 203 M486.5 203 L487.5 206.5 H487.5 L488.5 205 H489.5 L490.5 203 M494.5 203 L495.5 201.5 H497.5 L498.5 203 M502.5 203 L503.5 205.5 H504.5 L505.5 206 H505.5 L506.5 203 M507.5 203 L508.5 205.5 H509.5 L510.5 203 M618.5 469 L619.5 473.5 H619.5 L620.5 471.5 H621.5 L622.5 469 M623.5 469 L624.5 466.5 H624.5 L625.5 469 M627.5 469 L628.5 466.5 H630.5 L631.5 469 M633.5 469 L634.5 466.5 H634.5 L635.5 469 M636.5 469 L637.5 466 H637.5 L638.5 466.5 H640.5 L641.5 469 M642.5 469 L643.5 473 H643.5 L644.5 469 M644.5 469 L645.5 467 H645.5 L646.5 466 H646.5 L647.5 473.5 H648.5 L649.5 469 M649.5 469 L650.5 466.5 H650.5 L651.5 469 M653.5 469 L654.5 466 H655.5 L656.5 471 H658.5 L659.5 467.5 H660.5 L661.5 469 M663.5 469 L664.5 467 H665.5 L666.5 469 M668.5 469 L669.5 473 H670.5 L671.5 469 M673.5 469 L674.5 466.5 H675.5 L676.5 469 M677.5 469 L678.5 466.5 H678.5 L679.5 466.5 H681.5 L682.5 466.5 H684.5 L685.5 469 M688.5 469 L689.5 467 H690.5 L691.5 467 H692.5 L693.5 469 M697.5 469 L698.5 466.5 H700.5 L701.5 466 H703.5 L704.5 469 M705.5 469 L706.5 471.5 H707.5 L708.5 469 M711.5 469 L712.5 467 H712.5 L713.5 466.5 H713.5 L714.5 469 M718.5 469 L719.5 471 H719.5 L720.5 469 M722.5 469 L723.5 467 H723.5 L724.5 467 H724.5 L725.5 469 M726.5 469 L727.5 466.5 H728.5 L729.5 473.5 H730.5 L731.5 469 M734.5 469 L735.5 466 H735.5 L736.5 473.5 H736.5 L737.5 469 M738.5 469 L739.5 466.5 H740.5 L741.5 472 H741.5 L742.5 469 M743.5 469 L744.5 473 H746.5 L747.5 466.5 H747.5 L748.5 467 H749.5 L750.5 469 M753.5 469 L754.5 471 H756.5 L757.5 469 M757.5 469 L758.5 466.5 H758.5 L759.5 469 M761.5 469 L762.5 466 H762.5 L763.5 469 M763.5 469 L764.5 471.5 H765.5 L766.5 469 M767.5 469 L768.5 466.5 H768.5 L769.5 466.5 H771.5 L772.5 469 M773.5 469 L774.5 472.5 H775.5 L776.5 469 M780.5 469 L781.5 466.5 H782.5 L783.5 469 M787.5 469 L788.5 466 H788.5 L789.5 469 M790.5 469 L791.5 471.5 H792.5 L793.5 473 H793.5 L794.5 466.5 H794.5 L795.5 469 M797.5 469 L798.5 466 H799.5 L800.5 469 M804.5 469 L805.5 467.5 H805.5 L806.5 466 H806.5 L807.5 469 M810.5 469 L811.5 466.5 H811.5 L812.5 471.5 H812.5 L813.5 469 M816.5 469 L817.5 467.5 H817.5 L818.5 473 H819.5 L820.5 469 M823.5 469 L824.5 466.5 H825.5 L826.5 466.5 H828.5 L829.5 469 M831.5 469 L832.5 466.5 H832.5 L833.5 469 M834.5 469 L835.5 467 H837.5 L838.5 466.5 H839.5 L840.5 469 M841.5 469 L842.5 467 H842.5 L843.5 472 H843.5 L844.5 467.5 H845.5 L846.5 469 M847.5 469 L848.5 467.5 H850.5 L851.5 472.5 H851.5 L852.5 466.5 H853.5 L854.5 469 M854.5 469 L855.5 467.5 H855.5 L856.5 467 H856.5 L857.5 469 M860.5 469 L861.5 467 H862.5 L863.5 473 H863.5 L864.5 469 M868.5 469 L869.5 466.5 H869.5 L870.5 472.5 H871.5 L872.5 469 M874.5 469 L875.5 471 H876.5 L877.5 469 M881.5 469 L882.5 472.5 H882.5 L883.5 473 H885.5 L886.5 469 M886.5 469 L887.5 467.5 H887.5 L888.5 466.5 H888.5 L889.5 467 H891.5 L892.5 469 M894.5 469 L895.5 466.5 H896.5 L897.5 469 M899.5 469 L900.5 467.5 H901.5 L902.5 467.5 H902.5 L903.5 469 M906.5 469 L907.5 471.5 H907.5 L908.5 469 M912.5 469 L913.5 466.5 H913.5 L914.5 467 H914.5 L915.5 469 M916.5 469 L917.5 466 H919.5 L920.5 469 M922.5 469 L923.5 466.5 H923.5 L924.5 472.5 H924.5 L925.5 472 H927.5 L928.5 469 M930.5 469 L931.5 466.5 H932.5 L933.5 472 H935.5 L936.5 467.5 H937.5 L938.5 469 M942.5 469 L943.5 467 H943.5 L944.5 469 M948.5 469 L949.5 473 H949.5 L950.5 471 H952.5 L953.5 469 M954.5 469 L955.5 472 H956.5 L957.5 469 M961.5 469 L962.5 473 H962.5 L963.5 469 M965.5 469 L966.5 471.5 H966.5 L967.5 469 M971.5 469 L972.5 466 H972.5 L973.5 467.5 H973.5 L974.5 467 H974.5 L975.5 469 M976.5 469 L977.5 471 H977.5 L978.5 469 M979.5 469 L980.5 471 H981.5 L982.5 471 H984.5 L985.5 466 H985.5 L986.5 469 M986.5 469 L987.5 467.5 H988.5 L989.5 469 M990.5 469 L991.5 466 H992.5 L993.5 469 M994.5 469 L995.5 466.5 H995.5 L996.5 466.5 H998.5 L999.5 469 M1002.5 469 L1003.5 467 H1003.5 L1004.5 469 M1007.5 469 L1008.5 473.5 H1008.5 L1009.5 471 H1010.5 L1011.5 469 M1014.5 469 L1015.5 466 H1015.5 L1016.5 467.5 H1018.5 L1019.5 469" clip-path="url(#gc)" fill="none" stroke="#f4f400" stroke-width="1.5" stroke-linejoin="miter" shape-rendering="crispEdges"/>
<path d="M509.0 203.0 L510.0 205.0 L510.5 206.0 L511.0 216.0 L512.0 232.0 L513.0 251.0 L514.0 270.0 L515.0 290.0 L515.5 323.0 L516.5 325.0 L516.5 356.0 L517.3 358.0 L517.4 410.0 L518.5 411.0 L519.4 440.0 L519.7 465.0 L520.6 466.0 L521.0 484.0 L522.0 485.0 L523.0 500.0 L524.0 500.0 L524.5 493.0 L526.0 490.0 L527.0 492.0 L528.0 487.0 L529.0 485.0 L530.0 487.0 L531.0 481.0 L533.0 484.0 L534.0 481.0 L536.0 483.0 L538.0 483.0 L540.0 479.0 L542.0 479.0 L543.0 481.0 L545.0 478.0 L547.0 481.0 L549.0 478.0 L551.0 479.0 L553.0 478.5 L555.0 476.0 L557.0 481.0 L559.0 478.0 L563.0 479.0 L566.0 476.0 L568.0 479.0 L571.0 479.0 L573.0 476.0 L575.0 479.0 L577.0 477.0 L579.0 479.0 L583.0 475.0 L585.0 479.0 L588.0 476.0 L589.0 476.0 L591.0 478.0 L594.0 478.0 L598.0 478.0 L600.0 474.0 L602.0 474.0 L603.0 471.0 L605.0 472.0 L607.0 470.0 L609.0 470.0 L612.0 472.0 L614.0 469.0 L617.0 469.0" fill="none" stroke="#f4f400" stroke-width="1.3" stroke-linejoin="miter" shape-rendering="auto"/>
<rect x="516" y="322" width="1" height="36" fill="#948a74"/>
<!-- markers -->
<polygon points="510.5,36 521.5,36 516,46" fill="#ffa600" shape-rendering="auto"/>
<polygon points="110,189 121,189 115.5,197" fill="#ffa600" shape-rendering="auto"/>
<polygon points="995.5,325.5 1004,320 1004,330.5" fill="#f4f400" shape-rendering="auto"/>
<rect x="1003" y="324.5" width="16" height="1.5" fill="#f4f400"/>
<!-- ch1 marker -->
<rect x="18" y="466.5" width="6" height="2" fill="#f4f400"/>
<polygon points="23,463 30.5,467.5 23,473" fill="#f4f400" shape-rendering="auto"/>
<circle cx="10.5" cy="467.8" r="9.2" fill="#f4f400" stroke="#ffa000" stroke-width="1.6" shape-rendering="auto"/>
<path d="M11.2 463.2 V472 M8.4 466 L11.2 463.6" stroke="#000" stroke-width="1.7" fill="none" shape-rendering="auto"/>
<text x="108" y="353" font-family="Liberation Sans" font-size="12" fill="#f0e000" transform="translate(108 0) scale(0.8 1) translate(-108 0)">SW</text>
</svg>
<div class="bp"></div>
<!-- vertical box -->
<div class="box" style="left:21px;top:584px;width:281px;height:24px"></div>
<div class="pill" style="left:29px;top:591px">C1</div>
<div class="t" style="left:67px;top:590px">20.0V/div</div>
<div class="t" style="left:182px;top:590px">1M&#937;</div>
<div class="t" style="left:215px;top:587px;font-size:9px">B</div>
<svg style="position:absolute;left:220px;top:589px" width="6" height="6"><path d="M4 0.8 L2.6 4" stroke="#fff" stroke-width="1.2"/></svg>
<div class="t" style="left:219px;top:592px;font-size:11.5px">W</div>
<div class="t" style="left:230px;top:590px">:500M</div>
<!-- cursor box -->
<div class="box" style="left:306px;top:584px;width:136px;height:70px"></div>
<div style="position:absolute;left:352px;top:590px;width:86px;height:64px;border:1px solid #d0d0d0;border-bottom:none"></div>
<div style="position:absolute;left:352px;top:611px;width:86px;height:1px;background:#d0d0d0"></div>
<div style="position:absolute;left:352px;top:632px;width:86px;height:1px;background:#d0d0d0"></div>
<div class="pill" style="left:314px;top:592px;width:35px;height:15px;line-height:12px">V1</div>
<div class="pill" style="left:314px;top:613px;width:35px;height:15px;line-height:12px">V2</div>
<div class="pill" style="left:314px;top:634px;width:35px;height:15px;line-height:12px">&#916;V</div>
<div class="t" style="left:354px;top:594px">80.0V</div>
<div class="t" style="left:354px;top:615px">100V</div>
<div class="t" style="left:354px;top:636px">20.0V</div>
<!-- trigger box -->
<div class="box" style="left:591px;top:584px;width:187px;height:26px"></div>
<div style="position:absolute;left:597px;top:591px;width:16px;height:15px;background:#c8ccd4;border:1px solid #ff9a00;color:#111;font-size:10.5px;font-weight:bold;line-height:12px;text-align:left;padding-left:1px">A'</div>
<div class="pill" style="left:615px;top:591px">C1</div>
<svg style="position:absolute;left:648px;top:589px" width="20" height="18"><path d="M2.5 3 H6 L12 14 H16" fill="none" stroke="#fff" stroke-width="1.6"/></svg>
<div class="t" style="left:668px;top:590px">52.8V</div>
<!-- horiz box -->
<div class="box" style="left:781px;top:584px;width:231px;height:93px"></div>
<div class="t" style="left:789px;top:590px">50.0ns/div</div>
<div class="t" style="left:854px;top:590px">10.0GS/s</div>
<div class="t" style="left:940px;top:590px">100ps/pt</div>
<div class="t" style="left:789px;top:611px;color:#00e000">Run</div>
<div class="t" style="left:874px;top:611px">Sample</div>
<div class="t" style="left:789px;top:632px">410 acqs</div>
<div class="t" style="left:929px;top:632px">RL:5.0k</div>
<div class="t" style="left:789px;top:653px">Auto</div>
<div class="t" style="left:831px;top:653px">April 29, 2025</div>
<div class="t" style="left:956px;top:653px;color:#f0a020">18:20:39</div>
<svg style="position:absolute;left:989px;top:610px" width="12" height="20"><rect x="3.7" y="1.2" width="4" height="13" rx="1.8" fill="#f8f830"/><circle cx="5.7" cy="15.3" r="3.5" fill="#f8f830"/></svg>
<!-- measurement box -->
<div class="box" style="left:21px;top:686px;width:566px;height:66px"></div>
<div class="t" style="left:127px;top:694px;width:70px;text-align:center">Value</div>
<div style="position:absolute;left:127px;top:712px;width:71px;height:20px;border:1px solid #d0d0d0;background:#000"></div>
<div class="t" style="left:129px;top:715px">97.2V</div>
<div style="position:absolute;left:127px;top:731px;width:71px;height:21px;border:1px solid #d0d0d0;background:#000"></div>
<div class="t" style="left:129px;top:734px">99.2V</div>
<div class="t" style="left:197px;top:694px;width:80px;text-align:center">Mean</div>
<div style="position:absolute;left:197px;top:712px;width:81px;height:20px;border:1px solid #d0d0d0;background:#262626"></div>
<div class="t" style="left:199px;top:715px">97.445808</div>
<div style="position:absolute;left:197px;top:731px;width:81px;height:21px;border:1px solid #d0d0d0;background:#262626"></div>
<div class="t" style="left:199px;top:734px">99.269349</div>
<div class="t" style="left:277px;top:694px;width:70px;text-align:center">Min</div>
<div style="position:absolute;left:277px;top:712px;width:71px;height:20px;border:1px solid #d0d0d0;background:#000"></div>
<div class="t" style="left:279px;top:715px">97.2</div>
<div style="position:absolute;left:277px;top:731px;width:71px;height:21px;border:1px solid #d0d0d0;background:#000"></div>
<div class="t" style="left:279px;top:734px">99.2</div>
<div class="t" style="left:347px;top:694px;width:70px;text-align:center">Max</div>
<div style="position:absolute;left:347px;top:712px;width:71px;height:20px;border:1px solid #d0d0d0;background:#262626"></div>
<div class="t" style="left:349px;top:715px">97.6</div>
<div style="position:absolute;left:347px;top:731px;width:71px;height:21px;border:1px solid #d0d0d0;background:#262626"></div>
<div class="t" style="left:349px;top:734px">100.0</div>
<div class="t" style="left:417px;top:694px;width:70px;text-align:center">St Dev</div>
<div style="position:absolute;left:417px;top:712px;width:71px;height:20px;border:1px solid #d0d0d0;background:#000"></div>
<div class="t" style="left:419px;top:715px">196.2m</div>
<div style="position:absolute;left:417px;top:731px;width:71px;height:21px;border:1px solid #d0d0d0;background:#000"></div>
<div class="t" style="left:419px;top:734px">226.9m</div>
<div class="t" style="left:487px;top:694px;width:60px;text-align:center">Count</div>
<div style="position:absolute;left:487px;top:712px;width:61px;height:20px;border:1px solid #d0d0d0;background:#000"></div>
<div class="t" style="left:489px;top:715px">411.0</div>
<div style="position:absolute;left:487px;top:731px;width:61px;height:21px;border:1px solid #d0d0d0;background:#000"></div>
<div class="t" style="left:489px;top:734px">411.0</div>
<div class="t" style="left:547px;top:694px;width:36px;text-align:center">Info</div>
<div style="position:absolute;left:547px;top:712px;width:37px;height:20px;border:1px solid #d0d0d0;background:#000"></div>
<div class="t" style="left:549px;top:715px"></div>
<div style="position:absolute;left:547px;top:731px;width:37px;height:21px;border:1px solid #d0d0d0;background:#000"></div>
<div class="t" style="left:549px;top:734px"></div>
<div class="pill" style="left:30px;top:714px">C1</div>
<div class="pill" style="left:30px;top:733px">C1</div>
<div class="t" style="left:69px;top:714px">High</div>
<div class="t" style="left:69px;top:734px">Max*</div>
</body></html>
